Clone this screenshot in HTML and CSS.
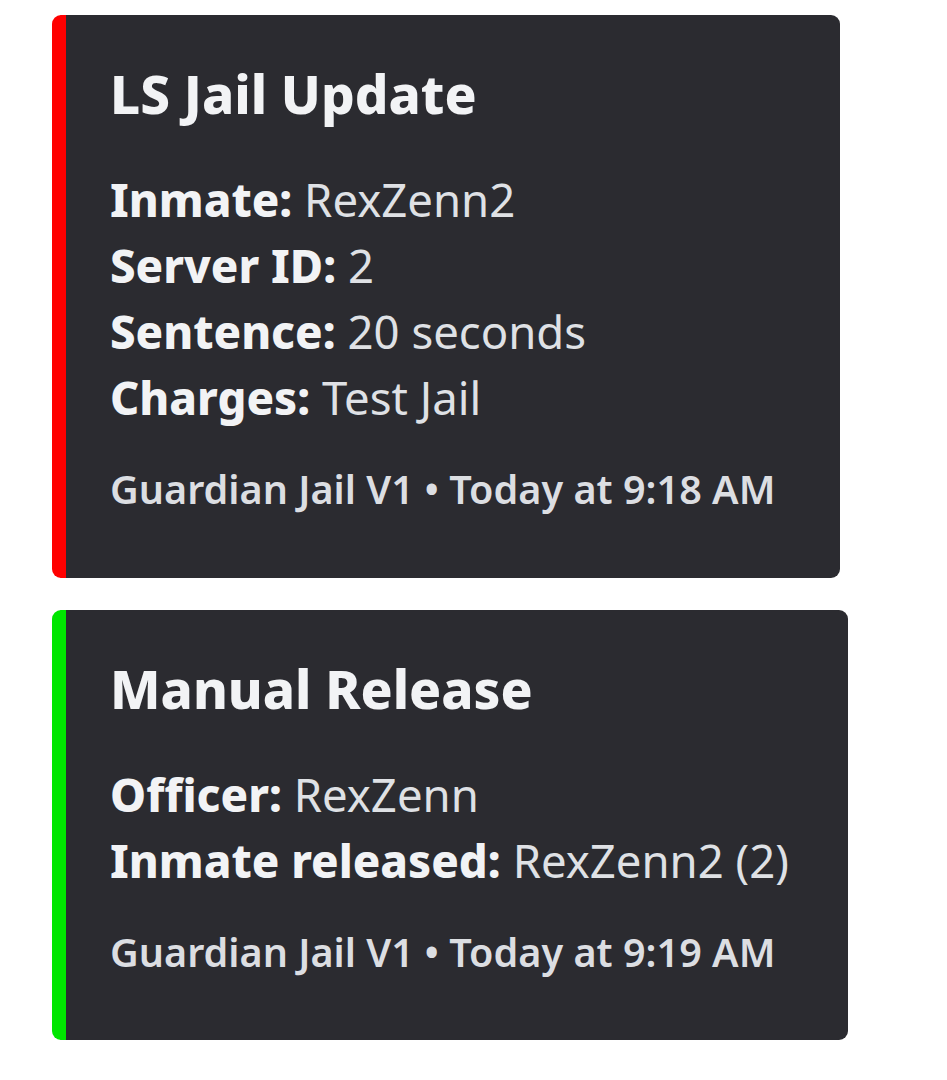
FILE: index.html
```html
<!DOCTYPE html>
<html>
<head>
<meta charset="utf-8">
<link rel="stylesheet" href="styles.css">
</head>
<body>
<div class="stack">
  <div class="embed embed-red">
    <div class="title">LS Jail Update</div>
    <div class="fields">
      <div class="field"><b>Inmate:</b> RexZenn2</div>
      <div class="field"><b>Server ID:</b> 2</div>
      <div class="field"><b>Sentence:</b> 20 seconds</div>
      <div class="field"><b>Charges:</b> Test Jail</div>
    </div>
    <div class="footer">Guardian Jail V1 • Today at 9:18 AM</div>
  </div>
  <div class="embed embed-green">
    <div class="title">Manual Release</div>
    <div class="fields">
      <div class="field"><b>Officer:</b> RexZenn</div>
      <div class="field"><b>Inmate released:</b> RexZenn2 (2)</div>
    </div>
    <div class="footer">Guardian Jail V1 • Today at 9:19 AM</div>
  </div>
</div>
</body>
</html>
```
FILE: styles.css
```css
html, body {
  margin: 0;
  padding: 0;
  background: #ffffff;
}
.stack {
  display: flex;
  flex-direction: column;
  align-items: flex-start;
  gap: 32px;
  padding: 15px 0 0 52px;
}
.embed {
  box-sizing: border-box;
  background: #2b2b30;
  border-radius: 9px;
  border-left: 14px solid #ff0000;
  padding: 46px 40px 0 44px;
  font-family: "Noto Sans", "Open Sans", sans-serif;
  color: #dfe1e5;
}
.embed-red {
  width: 788px;
  height: 563px;
}
.embed-green {
  width: 796px;
  height: 430px;
  border-left-color: #00e600;
}
.title {
  font-weight: 800;
  font-size: 53px;
  line-height: 66px;
  color: #f2f3f5;
  margin-bottom: 39px;
}
.field {
  font-size: 45.5px;
  line-height: 66px;
}
.field b {
  font-weight: 800;
  color: #f2f3f5;
}
.footer {
  margin-top: 34px;
  font-size: 39.6px;
  font-weight: 600;
  line-height: 50px;
  color: #dcdee2;
}
```
